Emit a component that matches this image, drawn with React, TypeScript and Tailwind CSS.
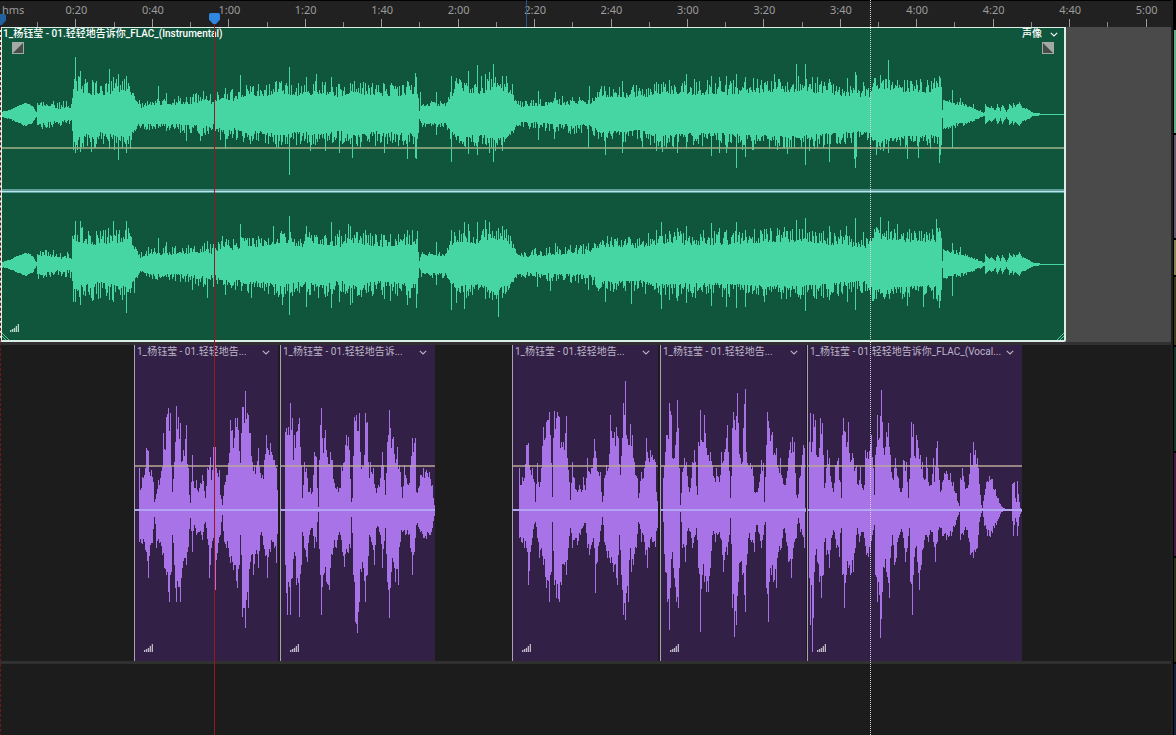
import type { ReactNode } from 'react'

// ruler units across the visible range, 10 seconds is a bit over 38 units
const SPAN = 1171
const SPAN_SECONDS = 306.4
const RULER_SECONDS = 310

const pct = (n: number) => `${(n / SPAN) * 100}%`

const MAJOR_TICKS = Array.from({ length: 15 }, (_, i) => {
  const s = (i + 1) * 20
  return `${Math.floor(s / 60)}:${(s % 60).toString().padStart(2, '0')}`
})

type Peaks = number[]

// linear interpolation over a flat [pos, value, pos, value, ...] list
function valueAt(list: Peaks, pos: number) {
  if (pos <= list[0]) return list[1]
  for (let i = 2; i < list.length; i += 2) {
    if (pos <= list[i]) {
      const t = (pos - list[i - 2]) / (list[i] - list[i - 2])
      return list[i - 1] + (list[i + 1] - list[i - 1]) * t
    }
  }
  return list[list.length - 1]
}

// the exact peak that falls inside a column, if there is one
function peakIn(list: Peaks, from: number, to: number) {
  for (let i = 0; i < list.length; i += 2) {
    if (list[i] >= from && list[i] < to) return list[i + 1]
  }
  return undefined
}

function noise(n: number) {
  const v = Math.sin(n * 127.1 + 11.7) * 43758.5453
  return v - Math.floor(v)
}

function columnsToPath(from: number, step: number, tops: number[], bottoms: number[]) {
  let d = `M${from} ${tops[0]}`
  tops.forEach((y, i) => {
    d += `V${y}H${from + (i + 1) * step}`
  })
  for (let i = bottoms.length - 1; i >= 0; i--) {
    d += `V${bottoms[i]}H${from + i * step}`
  }
  return d + 'Z'
}

function vocalPath(top: Peaks, bottom: Peaks) {
  const tops: number[] = []
  const bottoms: number[] = []
  const from = top[0]
  for (let x = from; x < top[top.length - 2]; x += 3) {
    const up = (525 - valueAt(top, x + 1)) * (1 - 0.22 * noise(x))
    const down = (valueAt(bottom, x + 1) - 525) * (1 - 0.24 * noise(x + 500))
    tops.push(Math.round(peakIn(top, x, x + 3) ?? 525 - up))
    bottoms.push(Math.round(peakIn(bottom, x, x + 3) ?? 525 + down))
  }
  return columnsToPath(from, 3, tops, bottoms)
}

// solid body of the stereo clip, and how far the peaks jump out of it
const BODY: Peaks = [2, 2, 10, 4, 18, 8, 25, 11, 32, 8, 36, 1, 37, 9, 50, 7, 60, 5, 71, 5, 73, 24, 85, 20, 100, 18, 115, 21, 128, 23, 134, 15, 140, 6, 150, 9, 170, 9, 190, 10, 205, 12, 214, 9, 222, 16, 232, 13, 245, 18, 260, 17, 280, 21, 300, 17, 320, 20, 343, 16, 350, 22, 375, 17, 400, 18, 417, 20, 419, 3, 421, 8, 445, 8, 449, 15, 456, 22, 480, 20, 495, 25, 508, 21, 516, 10, 521, 7, 560, 9, 590, 10, 600, 17, 640, 16, 660, 20, 700, 19, 725, 19, 750, 21, 800, 22, 830, 19, 869, 16, 872, 26, 905, 22, 935, 21, 941, 26, 942, 3, 943, 14, 955, 9, 965, 8, 984, 1, 985, 9, 989, 5, 991, 7, 995, 3, 997, 9, 1000, 3, 1002, 9, 1006, 2, 1008, 5, 1009, 10, 1012, 6, 1013, 10, 1015, 7, 1019, 11, 1022, 6, 1026, 5, 1033, 1, 1045, 0, 1065, 0]
const JITTER: Peaks = [2, 1, 36, 1, 37, 6, 72, 9, 73, 16, 100, 18, 128, 13, 136, 4, 140, 8, 190, 10, 214, 13, 245, 12, 280, 14, 417, 15, 419, 1, 421, 5, 445, 6, 455, 14, 505, 14, 516, 4, 521, 7, 590, 11, 600, 12, 660, 14, 800, 16, 868, 12, 873, 12, 940, 15, 942, 1, 955, 5, 970, 2, 985, 1, 1025, 1, 1033, 0, 1065, 0]

type Channel = { id: string; mid: number; top: Peaks; bottom: Peaks }

const CHANNELS: Channel[] = [
  {
    id: 'left',
    mid: 114,
    top: [75, 57, 80, 43, 84, 30, 92, 34, 96, 33, 109, 45, 113, 37, 118, 40, 126, 38, 158, 28, 166, 21, 193, 20, 225, 26, 240, 39, 252, 27, 276, 33, 289, 47, 306, 37, 316, 40, 331, 37, 339, 30, 350, 31, 365, 31, 384, 30, 407, 33, 415, 41, 416, 37, 420, 22, 436, 22, 451, 38, 456, 36, 460, 34, 468, 43, 477, 49, 481, 38, 485, 40, 489, 42, 493, 50, 502, 38, 506, 38, 512, 30, 538, 23, 555, 22, 589, 28, 601, 28, 622, 33, 656, 32, 669, 34, 686, 40, 694, 35, 711, 38, 719, 37, 726, 38, 736, 40, 745, 37, 753, 36, 774, 40, 796, 50, 805, 50, 812, 37, 817, 37, 821, 33, 829, 35, 847, 36, 855, 42, 856, 39, 863, 32, 880, 39, 888, 54, 897, 34, 907, 34, 931, 33, 939, 38, 940, 36, 952, 24, 960, 16, 973, 10],
    bottom: [73, 35, 75, 38, 80, 37, 91, 37, 109, 34, 118, 45, 126, 38, 130, 34, 186, 26, 200, 26, 225, 34, 276, 32, 289, 60, 310, 36, 325, 36, 339, 38, 352, 43, 384, 38, 407, 44, 415, 43, 416, 44, 436, 20, 451, 47, 468, 39, 477, 40, 489, 38, 493, 47, 502, 36, 538, 25, 554, 24, 588, 33, 605, 40, 622, 38, 642, 33, 656, 36, 662, 37, 677, 38, 686, 34, 711, 41, 719, 38, 726, 38, 736, 53, 745, 42, 753, 35, 787, 39, 805, 50, 829, 47, 854, 44, 855, 53, 856, 42, 876, 40, 888, 38, 907, 44, 918, 43, 939, 48, 940, 40, 952, 33],
  },
  {
    id: 'right',
    mid: 264,
    top: [72, 28, 75, 43, 80, 43, 88, 33, 96, 33, 105, 34, 113, 43, 118, 30, 126, 43, 128, 36, 158, 26, 166, 22, 207, 23, 222, 28, 240, 40, 252, 26, 273, 38, 280, 31, 289, 48, 306, 38, 316, 29, 331, 42, 339, 34, 348, 40, 350, 38, 356, 32, 365, 34, 384, 29, 398, 30, 407, 34, 417, 33, 436, 22, 451, 34, 461, 30, 464, 42, 468, 40, 477, 42, 485, 44, 489, 42, 498, 36, 502, 38, 506, 35, 510, 28, 535, 16, 555, 21, 588, 21, 602, 24, 621, 24, 639, 26, 656, 34, 661, 42, 669, 33, 677, 36, 686, 38, 703, 34, 711, 41, 719, 36, 726, 34, 736, 42, 745, 34, 764, 35, 779, 34, 787, 33, 796, 44, 805, 46, 812, 33, 829, 38, 840, 34, 846, 38, 855, 46, 863, 32, 875, 32, 880, 47, 888, 43, 897, 40, 907, 32, 919, 33, 936, 45, 939, 36, 940, 33, 952, 21, 960, 17],
    bottom: [73, 37, 75, 37, 80, 40, 92, 36, 109, 35, 113, 37, 126, 48, 134, 28, 192, 25, 207, 33, 225, 30, 251, 33, 274, 30, 282, 40, 289, 50, 306, 42, 331, 43, 339, 37, 350, 40, 352, 38, 384, 34, 390, 36, 407, 40, 416, 43, 436, 20, 451, 45, 456, 38, 464, 44, 498, 52, 502, 33, 537, 22, 550, 26, 588, 25, 605, 37, 631, 39, 661, 44, 669, 35, 677, 36, 686, 38, 711, 41, 726, 42, 736, 43, 745, 42, 764, 37, 805, 46, 829, 35, 847, 37, 855, 45, 872, 36, 907, 41, 923, 42, 939, 43, 940, 36, 952, 31],
  },
]

function stereoPath({ mid, top, bottom }: Channel) {
  const tops: number[] = []
  const bottoms: number[] = []
  for (let x = 2; x < 1065; x++) {
    const body = valueAt(BODY, x)
    const jump = valueAt(JITTER, x)
    tops.push(mid - Math.round(peakIn(top, x, x + 1) ?? body + jump * noise(x + mid) ** 2))
    bottoms.push(mid + 1 + Math.round(peakIn(bottom, x, x + 1) ?? body * 0.95 + jump * noise(x + mid * 7) ** 2))
  }
  return columnsToPath(2, 1, tops, bottoms)
}

type VocalClip = {
  title: string
  start: number
  end: number
  viewBox: string
  top: Peaks
  bottom: Peaks
}

const VOCALS: VocalClip[] = [
  {
    title: '1_杨钰莹 - 01.轻轻地告...',
    start: 134,
    end: 278,
    viewBox: '46 30 429 948',
    top: [57, 400, 62, 465, 68, 425, 75, 400, 80, 340, 85, 348, 88, 410, 95, 405, 100, 440, 104, 500, 108, 478, 115, 435, 120, 430, 126, 395, 130, 295, 135, 345, 140, 245, 145, 220, 150, 235, 155, 395, 158, 470, 162, 380, 169, 213, 175, 245, 180, 265, 185, 380, 190, 345, 198, 270, 204, 400, 208, 480, 211, 505, 217, 360, 222, 460, 228, 435, 235, 470, 240, 445, 248, 420, 256, 490, 262, 400, 270, 365, 274, 435, 280, 335, 286, 335, 290, 400, 297, 405, 302, 480, 307, 510, 312, 450, 320, 420, 326, 385, 331, 255, 336, 285, 341, 340, 346, 250, 351, 250, 355, 285, 360, 385, 366, 215, 370, 215, 376, 168, 382, 235, 386, 240, 392, 295, 398, 380, 404, 390, 410, 390, 416, 340, 420, 415, 428, 420, 434, 375, 440, 300, 445, 345, 452, 325, 458, 360, 464, 375, 470, 400, 474, 520],
    bottom: [57, 620, 65, 625, 75, 645, 84, 730, 90, 630, 98, 625, 104, 545, 110, 640, 120, 620, 126, 660, 134, 700, 140, 720, 145, 770, 149, 800, 153, 710, 158, 600, 162, 690, 166, 760, 170, 800, 175, 755, 180, 800, 186, 700, 198, 690, 204, 635, 211, 550, 217, 650, 222, 570, 230, 600, 238, 590, 246, 615, 256, 560, 264, 630, 269, 730, 274, 640, 281, 610, 286, 765, 292, 655, 300, 600, 307, 540, 312, 620, 320, 640, 330, 685, 340, 705, 351, 760, 358, 690, 362, 600, 368, 845, 372, 820, 376, 880, 384, 820, 390, 680, 395, 660, 401, 720, 410, 645, 416, 700, 422, 600, 430, 630, 443, 730, 450, 650, 458, 620, 464, 640, 470, 685, 474, 530],
  },
  {
    title: '1_杨钰莹 - 01.轻轻地告诉...',
    start: 280,
    end: 435,
    viewBox: '484 30 462 948',
    top: [495, 290, 500, 280, 506, 275, 511, 205, 516, 250, 520, 375, 524, 300, 530, 290, 538, 250, 544, 390, 547, 490, 553, 380, 560, 400, 566, 470, 572, 460, 577, 470, 582, 350, 588, 365, 592, 460, 595, 515, 600, 270, 604, 218, 608, 310, 612, 310, 617, 285, 623, 365, 630, 350, 637, 375, 645, 460, 652, 455, 660, 460, 665, 395, 672, 380, 678, 300, 684, 305, 689, 345, 693, 500, 697, 490, 702, 245, 710, 240, 717, 235, 721, 350, 727, 390, 732, 360, 736, 235, 742, 260, 747, 430, 752, 380, 760, 400, 766, 460, 772, 460, 780, 430, 786, 350, 790, 390, 796, 480, 801, 320, 807, 225, 812, 280, 820, 305, 826, 385, 832, 335, 837, 390, 842, 410, 847, 490, 853, 390, 860, 430, 866, 450, 872, 390, 878, 310, 886, 310, 890, 470, 895, 460, 902, 420, 910, 400, 920, 405, 928, 410, 936, 450, 941, 490, 945, 522],
    bottom: [495, 690, 501, 840, 506, 740, 511, 840, 516, 730, 522, 650, 530, 750, 538, 845, 543, 690, 547, 590, 553, 640, 561, 680, 568, 600, 575, 580, 582, 640, 588, 620, 595, 530, 600, 720, 604, 840, 610, 720, 618, 740, 627, 765, 632, 700, 640, 640, 648, 640, 655, 600, 660, 600, 668, 650, 674, 695, 684, 655, 690, 640, 695, 545, 700, 720, 706, 860, 712, 895, 718, 800, 724, 710, 730, 700, 737, 800, 743, 720, 748, 600, 755, 620, 763, 690, 770, 580, 780, 600, 788, 700, 796, 580, 802, 740, 808, 850, 814, 710, 820, 680, 826, 740, 834, 750, 840, 620, 848, 590, 856, 600, 865, 600, 872, 640, 878, 720, 884, 650, 890, 570, 900, 590, 910, 610, 920, 612, 930, 600, 938, 580, 945, 530],
  },
  {
    title: '1_杨钰莹 - 01.轻轻地告...',
    start: 512,
    end: 658,
    viewBox: '40 30 435 948',
    top: [57, 400, 62, 450, 67, 425, 73, 430, 79, 330, 85, 325, 90, 405, 96, 400, 102, 440, 106, 500, 112, 385, 118, 455, 124, 400, 129, 275, 135, 310, 140, 260, 148, 232, 152, 300, 157, 485, 161, 310, 164, 228, 168, 250, 172, 230, 178, 245, 183, 320, 190, 320, 199, 243, 203, 370, 208, 440, 211, 495, 217, 380, 223, 430, 230, 465, 237, 450, 245, 470, 251, 425, 256, 465, 262, 370, 268, 410, 275, 400, 283, 312, 289, 370, 294, 410, 300, 410, 304, 470, 308, 500, 313, 430, 320, 390, 326, 400, 331, 240, 337, 310, 343, 290, 349, 275, 354, 310, 360, 420, 366, 310, 370, 205, 374, 240, 377, 138, 380, 300, 387, 330, 391, 268, 396, 300, 399, 370, 404, 380, 411, 430, 416, 490, 423, 410, 429, 430, 434, 400, 440, 310, 446, 370, 452, 345, 458, 360, 466, 380, 470, 470, 474, 525],
    bottom: [57, 610, 65, 620, 73, 640, 80, 640, 86, 750, 91, 650, 98, 610, 106, 560, 112, 610, 118, 670, 124, 640, 130, 690, 140, 760, 149, 800, 153, 710, 157, 560, 162, 750, 170, 790, 178, 800, 184, 750, 192, 690, 199, 720, 205, 640, 211, 580, 218, 640, 225, 610, 232, 630, 240, 600, 248, 580, 256, 565, 262, 640, 268, 660, 276, 620, 283, 640, 287, 775, 291, 680, 298, 620, 308, 545, 314, 620, 322, 670, 330, 685, 340, 710, 352, 750, 358, 600, 364, 720, 370, 840, 376, 855, 384, 800, 390, 640, 393, 710, 400, 690, 408, 640, 416, 560, 424, 620, 430, 600, 436, 660, 442, 700, 448, 640, 456, 620, 466, 635, 471, 580, 474, 530],
  },
  {
    title: '1_杨钰莹 - 01.轻轻地告...',
    start: 660,
    end: 806,
    viewBox: '484 30 435 948',
    top: [491, 430, 497, 350, 501, 300, 505, 300, 510, 205, 516, 240, 520, 370, 525, 370, 530, 290, 533, 195, 538, 280, 541, 400, 544, 510, 548, 410, 556, 370, 562, 380, 566, 455, 572, 460, 578, 380, 584, 345, 588, 380, 593, 480, 598, 320, 604, 225, 609, 320, 613, 320, 616, 240, 620, 340, 625, 360, 632, 350, 639, 390, 646, 430, 652, 400, 660, 440, 667, 350, 674, 350, 680, 310, 684, 270, 688, 350, 694, 490, 699, 280, 703, 230, 708, 285, 713, 175, 717, 265, 722, 370, 728, 380, 731, 280, 737, 163, 741, 350, 747, 390, 752, 385, 760, 395, 766, 470, 773, 470, 780, 440, 786, 375, 791, 385, 796, 500, 800, 330, 805, 230, 809, 280, 815, 300, 820, 290, 826, 355, 831, 340, 838, 400, 843, 370, 850, 430, 858, 450, 866, 370, 872, 320, 880, 305, 886, 320, 890, 480, 895, 490, 901, 430, 906, 390, 911, 330, 915, 340, 918, 520],
    bottom: [491, 560, 497, 710, 503, 800, 509, 885, 513, 760, 518, 650, 524, 730, 530, 800, 536, 820, 540, 700, 544, 530, 550, 640, 558, 680, 566, 580, 572, 590, 580, 640, 588, 600, 592, 580, 598, 700, 604, 890, 609, 720, 615, 740, 620, 770, 626, 770, 632, 700, 640, 600, 648, 620, 655, 600, 664, 610, 672, 710, 678, 650, 684, 660, 690, 600, 694, 550, 700, 820, 706, 905, 712, 870, 716, 740, 722, 680, 730, 720, 737, 830, 742, 690, 748, 610, 756, 620, 764, 650, 770, 570, 778, 590, 786, 640, 792, 600, 797, 560, 802, 760, 806, 860, 811, 740, 817, 720, 823, 740, 830, 760, 838, 650, 846, 640, 854, 580, 862, 620, 868, 680, 875, 730, 882, 640, 890, 610, 896, 550, 903, 590, 910, 600, 915, 640, 918, 530],
  },
  {
    title: '1_杨钰莹 - 01.轻轻地告诉你_FLAC_(Vocal...',
    start: 807,
    end: 1022,
    viewBox: '54 30 642 948',
    top: [57, 320, 61, 235, 64, 350, 69, 238, 75, 255, 80, 360, 85, 365, 92, 250, 97, 265, 101, 360, 104, 460, 109, 400, 113, 345, 119, 370, 123, 440, 130, 470, 137, 390, 145, 370, 150, 440, 154, 490, 158, 300, 161, 250, 166, 290, 171, 320, 176, 260, 181, 380, 186, 355, 191, 370, 198, 390, 204, 450, 210, 395, 216, 460, 222, 450, 227, 345, 233, 350, 240, 330, 245, 300, 250, 400, 254, 480, 257, 360, 262, 240, 267, 310, 273, 165, 277, 260, 283, 360, 290, 290, 296, 263, 300, 360, 306, 430, 312, 400, 317, 368, 324, 430, 332, 470, 338, 460, 341, 375, 348, 380, 353, 440, 356, 490, 360, 370, 365, 260, 370, 268, 376, 370, 380, 300, 386, 340, 391, 360, 396, 380, 404, 435, 410, 365, 415, 440, 424, 450, 430, 370, 434, 440, 438, 340, 443, 318, 446, 400, 452, 470, 458, 440, 463, 413, 468, 408, 480, 415, 490, 440, 498, 475, 504, 505, 509, 512, 511, 430, 517, 400, 523, 440, 530, 460, 536, 450, 540, 355, 545, 390, 550, 320, 555, 345, 561, 370, 566, 400, 570, 480, 576, 518, 582, 480, 590, 440, 598, 423, 606, 433, 615, 463, 625, 490, 634, 512, 645, 522, 664, 522, 668, 448, 672, 440, 676, 490, 680, 500, 683, 437, 687, 500, 691, 518, 696, 522],
    bottom: [57, 730, 61, 870, 64, 750, 68, 950, 71, 850, 75, 660, 82, 680, 88, 740, 95, 790, 99, 720, 104, 620, 110, 660, 118, 700, 124, 610, 132, 590, 140, 640, 147, 665, 153, 580, 158, 720, 164, 820, 169, 720, 175, 700, 181, 720, 190, 710, 196, 640, 202, 580, 209, 620, 215, 590, 222, 610, 228, 660, 235, 665, 241, 650, 248, 600, 253, 570, 257, 720, 262, 800, 267, 780, 272, 910, 277, 770, 284, 700, 290, 710, 297, 790, 302, 670, 308, 600, 314, 690, 320, 670, 328, 600, 336, 590, 345, 680, 352, 640, 358, 580, 362, 740, 367, 840, 371, 720, 376, 640, 382, 680, 388, 765, 394, 690, 400, 640, 408, 600, 416, 620, 424, 590, 430, 620, 437, 680, 442, 620, 450, 580, 458, 603, 470, 614, 485, 602, 495, 570, 505, 540, 509, 530, 512, 615, 520, 600, 528, 585, 536, 610, 542, 660, 549, 670, 556, 650, 563, 640, 568, 560, 576, 528, 584, 573, 592, 603, 600, 607, 608, 593, 618, 570, 628, 545, 636, 530, 645, 528, 664, 528, 670, 602, 676, 550, 683, 602, 688, 545, 696, 528],
  },
]

// overview of the lanes at the right edge of the editor
const LANES = [
  { id: 'a', size: 104, tint: 'bg-[#5fae8a]' },
  { id: 'b', size: 105, tint: 'bg-[#665a70]' },
  { id: 'c', size: 35, tint: 'bg-[#87834f]' },
  { id: 'd', size: 69, tint: 'bg-[#3f3c1c]' },
  { id: 'e', size: 105, tint: 'bg-[#17382c]' },
  { id: 'f', size: 105, tint: 'bg-[#461c44]' },
  { id: 'g', size: 105, tint: 'bg-[#30331b]' },
  { id: 'h', size: 72, tint: 'bg-[#16233f]' },
]

function Chevron() {
  return (
    <svg viewBox="0 0 8 5" className="h-[5px] w-2" fill="none" stroke="currentColor" aria-hidden>
      <path d="M0.8 0.8 4 3.9 7.2 0.8" strokeWidth="1.1" />
    </svg>
  )
}

function LevelBars() {
  return (
    <svg viewBox="0 0 9 8" className="h-2 w-[9px]" fill="currentColor" aria-hidden>
      <path d="M0 6h1.3v2H0zM1.9 5h1.3v3H1.9zM3.8 4h1.3v4H3.8zM5.7 2h1.3v6H5.7zM7.7 0H9v8H7.7z" />
    </svg>
  )
}

function FadeHandle({ side }: { side: 'in' | 'out' }) {
  return (
    <button type="button" aria-label={side === 'in' ? 'Fade in' : 'Fade out'} className="size-3">
      <svg viewBox="0 0 12 12" className="size-3" aria-hidden>
        <path d="M0 0h12v12H0z" fill="#a3aaa5" />
        <path d={side === 'in' ? 'M11 1v10H1z' : 'M1 1v10h10z'} fill="#474b49" />
      </svg>
    </button>
  )
}

function Ruler() {
  return (
    <div className="h-[27px] overflow-hidden border-t border-black bg-[#212121] font-['Noto_Sans',sans-serif] text-[11px] leading-[18px] text-[#9c9c9c]">
      <div className="flex h-full" style={{ width: `${(RULER_SECONDS / SPAN_SECONDS) * 100}%` }}>
        <div className="flex flex-1 basis-0 flex-col">
          <span className="pl-0.5">hms</span>
          <span className="mt-auto h-[5px] border-r border-[#8c8c8c]" />
        </div>
        {MAJOR_TICKS.map((label) => (
          <div key={label} className="flex flex-[2] basis-0 flex-col text-center">
            <span className="h-[18px]">{label}</span>
            <div className="flex h-2 items-end">
              <span className="h-2 w-1/2 border-r border-[#9c9c9c]" />
              <span className="h-[5px] w-1/2 border-r border-[#8c8c8c]" />
            </div>
          </div>
        ))}
      </div>
    </div>
  )
}

function StereoClip() {
  return (
    <section
      className="relative flex shrink-0 flex-col rounded-b-[2px] border-2 border-t border-[#dcefe6] bg-[#10563d] text-white"
      style={{ width: pct(1066) }}
    >
      <svg
        viewBox="2 28 1062 312"
        preserveAspectRatio="none"
        className="absolute inset-0 h-full w-full"
        shapeRendering="crispEdges"
        aria-hidden
      >
        {CHANNELS.map((channel) => (
          <path key={channel.id} d={stereoPath(channel)} fill="#45d6a4" />
        ))}
        <path d="M2 147h1062v2H2z" fill="#97ac84" fillOpacity="0.8" />
        <path d="M2 189h1062v4H2z" fill="#5f9c9c" />
        <path d="M2 191h1062v1H2z" fill="#b9e6e6" />
        <g stroke="#59c79f" shapeRendering="auto">
          <path d="M1057 340l7-7M1060 340l4-4" />
          <path d="M2 333l7 7M2 336l4 4" />
        </g>
      </svg>
      <header className="relative flex h-3 items-center justify-between pl-px pr-1.5">
        <h2 className="text-[10px] leading-3 font-medium whitespace-nowrap">
          1_杨钰莹 - 01.轻轻地告诉你_FLAC_(Instrumental)
        </h2>
        <button type="button" className="flex items-center gap-2 text-[10px] leading-3 font-medium">
          声像
          <Chevron />
        </button>
      </header>
      <div className="relative mt-0.5 flex justify-between px-2.5">
        <FadeHandle side="in" />
        <FadeHandle side="out" />
      </div>
      <div className="relative mt-auto px-2 pb-2 text-[#b5d6c8]">
        <LevelBars />
      </div>
    </section>
  )
}

function Vocal({ clip, offset }: { clip: VocalClip; offset: number }) {
  return (
    <section
      className="relative flex shrink-0 flex-col border-l border-[#aaa2b2] bg-[#322046] text-[#bdb6c6]"
      style={{ marginLeft: pct(clip.start - offset), width: pct(clip.end - clip.start) }}
    >
      <svg
        viewBox={clip.viewBox}
        preserveAspectRatio="none"
        className="absolute inset-0 h-full w-full"
        shapeRendering="crispEdges"
        aria-hidden
      >
        <path d={vocalPath(clip.top, clip.bottom)} fill="#a973e8" />
        <path d="M0 390h1000v6H0z" fill="#b9a598" fillOpacity="0.75" />
        <path d="M0 522h1000v6H0z" fill="#b3a5f4" />
      </svg>
      <header className="relative flex h-3.5 items-center justify-between pl-0.5 pr-2">
        <h2 className="text-[10px] leading-3 whitespace-nowrap">{clip.title}</h2>
        <button type="button" aria-label="Clip menu">
          <Chevron />
        </button>
      </header>
      <div className="relative mt-auto px-[9px] pb-[9px]">
        <LevelBars />
      </div>
    </section>
  )
}

function Track({ className, children }: { className: string; children?: ReactNode }) {
  return <div className={`flex ${className}`}>{children}</div>
}

function Marker({ className }: { className: string }) {
  return (
    <svg viewBox="0 0 11 11" className={`h-[11px] w-[11px] ${className}`} fill="currentColor" aria-hidden>
      <path d="M0 1.5Q0 0 1.5 0h8Q11 0 11 1.5V6.5L7 11H4L0 6.5z" />
    </svg>
  )
}

export default function App() {
  return (
    <main className="flex min-h-screen overflow-hidden bg-[#1c1c1c] font-['Roboto','Noto_Sans_CJK_SC',sans-serif]">
      <div className="relative flex min-w-0 flex-1 flex-col overflow-hidden">
        <Ruler />
        <Track className="h-[318px] border-b-[3px] border-[#333033] bg-[#4a4a4a]">
          <StereoClip />
        </Track>
        <Track className="h-[319px] border-b-[3px] border-[#303030] bg-[#1c1c1c]">
          {VOCALS.map((clip, i) => (
            <Vocal key={clip.start} clip={clip} offset={i ? VOCALS[i - 1].end : 0} />
          ))}
        </Track>
        <Track className="min-h-[71px] flex-1" />

        {/* range start, section marker, playhead and hover line */}
        <div className="absolute inset-y-0 left-0">
          <Marker className="absolute top-3.5 -left-[5px] text-[#23609f]" />
          <div className="mt-[27px] h-full border-l border-dashed border-[#6b1a1e]" />
        </div>
        <div className="absolute top-0 h-[27px] w-px bg-[#2b5685]" style={{ left: pct(526) }} />
        <div className="absolute inset-y-0 w-px" style={{ left: pct(214) }}>
          <div className="mt-[22px] h-full bg-[#98171f]" />
          <Marker className="absolute top-[13px] -left-[5px] text-[#2f87e0]" />
        </div>
        <div className="absolute inset-y-0 border-l border-dotted border-[#d8d8d8]" style={{ left: pct(870) }} />
      </div>

      <aside className="flex w-[5px] shrink-0 flex-col gap-0.5 border-l-2 border-[#202020] bg-black pt-[30px] pl-px">
        {LANES.map((lane) => (
          <div key={lane.id} className={`basis-0 ${lane.tint}`} style={{ flexGrow: lane.size }} />
        ))}
      </aside>
    </main>
  )
}
